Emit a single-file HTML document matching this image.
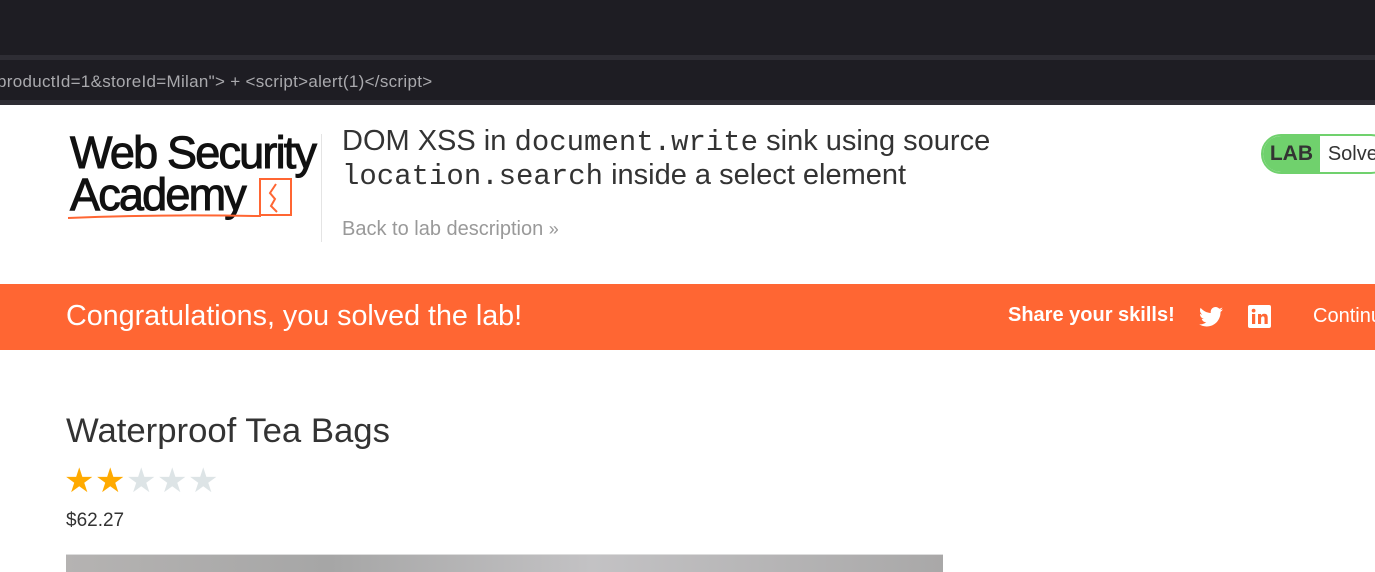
<!DOCTYPE html>
<html><head><style>
*{margin:0;padding:0;box-sizing:border-box}
html,body{overflow:hidden}
body{width:1375px;height:572px;background:#fff;font-family:"Liberation Sans",Arial,sans-serif;position:relative}
.abs{position:absolute;white-space:nowrap}
.mono{font-family:"Liberation Mono",monospace}
.st{display:inline-block;width:31px;font-size:34px}
</style></head><body>
<div class="abs" style="left:0;top:0;width:1375px;height:55px;background:#1e1d23"></div>
<div class="abs" style="left:0;top:55px;width:1375px;height:5px;background:#2e2d34"></div>
<div class="abs" style="left:0;top:60px;width:1375px;height:40px;background:#1e1d23"></div>
<div class="abs" style="left:0;top:100px;width:1375px;height:5px;background:#2e2d34"></div>
<div class="abs" style="left:-3px;top:72px;color:#a9a9ad;font-size:17px;letter-spacing:0.3px">productId=1&amp;storeId=Milan"&gt; + &lt;script&gt;alert(1)&lt;/script&gt;</div>

<div class="abs" style="left:70px;top:132px;font-size:45px;letter-spacing:-1.8px;line-height:42px;color:#111;-webkit-text-stroke:1px #111">Web Security<br>Academy</div>
<svg class="abs" style="left:66px;top:174px" width="230" height="48" viewBox="0 0 230 48">
<path d="M2 44 Q100 40 188 42" stroke="#ff6633" stroke-width="2" fill="none"/>
<path d="M188 42 L194 42 L194 5 L225 5 L225 41 L194 41" stroke="#ff6633" stroke-width="2" fill="none"/>
<path d="M210 10 L204 19 L209 25 L205 32 L211 38" stroke="#ff6633" stroke-width="2" fill="none"/>
</svg>
<div class="abs" style="left:321px;top:134px;width:1px;height:108px;background:#e4e4e4"></div>
<div class="abs" style="left:342px;top:125px;font-size:29px;line-height:32px;color:#333">DOM XSS in <span class="mono">document.write</span> sink using source<br><span class="mono">location.search</span> inside a select element</div>
<div class="abs" style="left:342px;top:218px;font-size:20px;color:#999">Back to lab description <span style="font-size:18px">»</span></div>

<div class="abs" style="left:1261px;top:134px;width:130px;height:40px;border:2px solid #70d16d;border-radius:20px;overflow:hidden;display:flex">
<div style="background:#70d16d;width:60px;font-weight:bold;font-size:21px;color:#333;line-height:36px;text-align:center">LAB</div>
<div style="font-size:20px;color:#333;line-height:36px;padding-left:8px">Solved</div></div>

<div class="abs" style="left:0;top:284px;width:1375px;height:66px;background:#ff6633"></div>
<div class="abs" style="left:66px;top:300px;font-size:28.7px;color:#fff">Congratulations, you solved the lab!</div>
<div class="abs" style="left:1008px;top:304px;font-size:20px;font-weight:bold;color:#fff">Share your skills!</div>
<svg class="abs" style="left:1199px;top:306px" width="24" height="22" viewBox="0 0 24 20"><path fill="#fff" d="M24 2.4c-.9.4-1.8.7-2.8.8 1-.6 1.8-1.6 2.2-2.7-1 .6-2 1-3.1 1.2C19.3.7 18 0 16.6 0c-2.7 0-4.9 2.2-4.9 4.9 0 .4 0 .8.1 1.1C7.7 5.8 4.1 3.9 1.7.9c-.4.7-.7 1.6-.7 2.5 0 1.7.9 3.2 2.2 4.1-.8 0-1.6-.2-2.2-.6v.1c0 2.4 1.7 4.4 3.9 4.8-.4.1-.8.2-1.3.2-.3 0-.6 0-.9-.1.6 2 2.4 3.4 4.6 3.4-1.7 1.3-3.8 2.1-6.1 2.1-.4 0-.8 0-1.2-.1 2.2 1.4 4.8 2.2 7.5 2.2 9.1 0 14-7.5 14-14v-.6c1-.7 1.8-1.6 2.5-2.5z"/></svg>
<svg class="abs" style="left:1248px;top:305px" width="23" height="23" viewBox="0 0 23 23"><rect width="23" height="23" rx="2" fill="#fff"/><rect x="4" y="9" width="3.2" height="10" fill="#ff6633"/><circle cx="5.6" cy="5.6" r="1.9" fill="#ff6633"/><path d="M10 9h3v1.5c.6-1 1.7-1.8 3.3-1.8 2.6 0 3.4 1.6 3.4 4.2V19h-3.2v-5.4c0-1.3-.4-2.2-1.6-2.2-1.3 0-1.8 1-1.8 2.2V19H10z" fill="#ff6633"/></svg>
<div class="abs" style="left:1313px;top:305px;width:62px;overflow:hidden;font-size:20px;color:#fff">Continue learning</div>

<div class="abs" style="left:66px;top:412px;font-size:34.7px;color:#333">Waterproof Tea Bags</div>
<div class="abs" style="left:64px;top:461px;line-height:40px"><span class="st" style="color:#ffaa00">★</span><span class="st" style="color:#ffaa00">★</span><span class="st" style="color:#dde4e6">★</span><span class="st" style="color:#dde4e6">★</span><span class="st" style="color:#dde4e6">★</span></div>
<div class="abs" style="left:66px;top:510px;font-size:19px;color:#333">$62.27</div>
<div class="abs" style="left:66px;top:554px;width:877px;height:18px;background:linear-gradient(90deg,#b5b3b2,#a6a6a6 30%,#c3c2c4 60%,#a9a8a8);border-top:1px solid #ddd"></div>
</body></html>
